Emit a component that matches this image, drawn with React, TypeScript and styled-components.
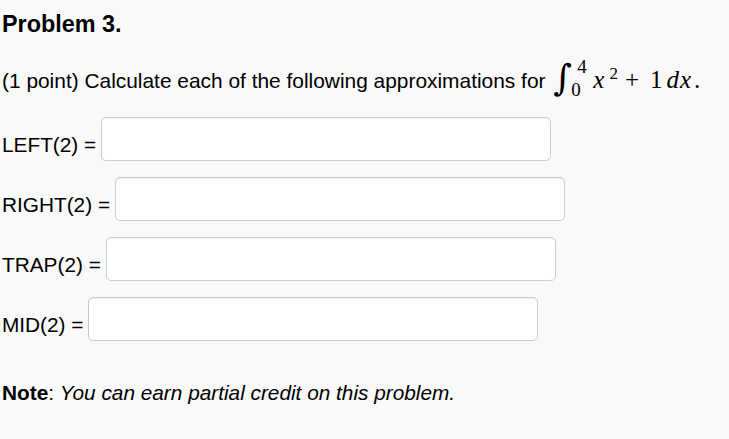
import styled, { createGlobalStyle } from "styled-components"

const GlobalStyle = createGlobalStyle`
    html, body {
        margin: 0;
        padding: 0;
        background-color: #f9f9f9;
    }
    body {
        font-family: "Liberation Sans", Arial, sans-serif;
        color: #000;
    }
`

const answers = [
    { label: "LEFT(2) =" },
    { label: "RIGHT(2) =" },
    { label: "TRAP(2) =" },
    { label: "MID(2) =" },
]

export default function App() {
    return (
        <>
            <GlobalStyle />
            <Container>
                <Title>Problem 3.</Title>

                <Statement>
                    (1 point) Calculate each of the following approximations for{" "}
                    <MathExpr>
                        <IntSign>∫</IntSign>
                        <Limits>
                            <Bound $indent={9}>4</Bound>
                            <Bound $indent={3}>0</Bound>
                        </Limits>
                        <Var $left={5}>x</Var>
                        <Sup>2</Sup>
                        <Op>+</Op>
                        <Digit>1</Digit>
                        <Var $left={4}>d</Var>
                        <Var $left={1}>x</Var>
                        <Dot>.</Dot>
                    </MathExpr>
                </Statement>

                <AnswerList>
                    {answers.map((item) => (
                        <AnswerRow key={item.label}>
                            <Label>{item.label}</Label>
                            <AnswerInput type="text" />
                        </AnswerRow>
                    ))}
                </AnswerList>

                <Note>
                    <b>Note</b>: <i>You can earn partial credit on this problem.</i>
                </Note>
            </Container>
        </>
    )
}

const Container = styled.div`
    padding: 0 2px;
    display: flex;
    flex-direction: column;
`

const Title = styled.h3`
    margin: 10px 0 0;
    font-size: 23.4px;
    line-height: 28px;
    font-weight: bold;
`

const Statement = styled.p`
    margin: 19px 0 0;
    font-size: 20.9px;
    line-height: 44px;
    height: 44px;
    white-space: nowrap;
`

const MathExpr = styled.span`
    font-family: "Liberation Serif", "Times New Roman", serif;
    font-size: 25px;
    line-height: 1;
`

const IntSign = styled.span`
    display: inline-block;
    width: 15px;
    margin-left: 2px;
    font-family: "DejaVu Serif", serif;
    font-size: 36px;
    line-height: 1;
    vertical-align: -2px;
`

const Limits = styled.span`
    display: inline-flex;
    flex-direction: column;
    width: 20px;
    font-family: "Liberation Serif", "Times New Roman", serif;
    font-size: 19px;
    line-height: 19px;
    gap: 4px;
    vertical-align: 15px;
`

const Bound = styled.span<{ $indent: number }>`
    padding-left: ${(p) => p.$indent}px;
`

const Var = styled.span<{ $left?: number }>`
    font-style: italic;
    margin-left: ${(p) => p.$left ?? 0}px;
`

const Sup = styled.span`
    font-size: 17px;
    vertical-align: 9px;
    margin-left: 5px;
`

const Op = styled.span`
    margin: 0 11px 0 7px;
`

const Digit = styled.span``

const Dot = styled.span`
    margin-left: 3px;
`

const AnswerList = styled.div`
    margin-top: 16px;
    display: flex;
    flex-direction: column;
    gap: 16px;
`

const AnswerRow = styled.div`
    display: flex;
    align-items: flex-start;
    gap: 5px;
`

const Label = styled.span`
    font-size: 20.8px;
    line-height: 24px;
    padding-top: 16px;
    white-space: nowrap;
`

const AnswerInput = styled.input`
    box-sizing: border-box;
    width: 450px;
    height: 44px;
    margin: 0;
    padding: 4px 8px;
    background-color: #fff;
    border: 1px solid #ccc;
    border-radius: 5px;
    box-shadow: inset 0 1px 1px rgba(0, 0, 0, 0.075);
    font-family: "Liberation Sans", Arial, sans-serif;
    font-size: 18px;
    outline: none;
`

const Note = styled.p`
    margin: 40px 0 0;
    font-size: 20.8px;
    line-height: 24px;
`
